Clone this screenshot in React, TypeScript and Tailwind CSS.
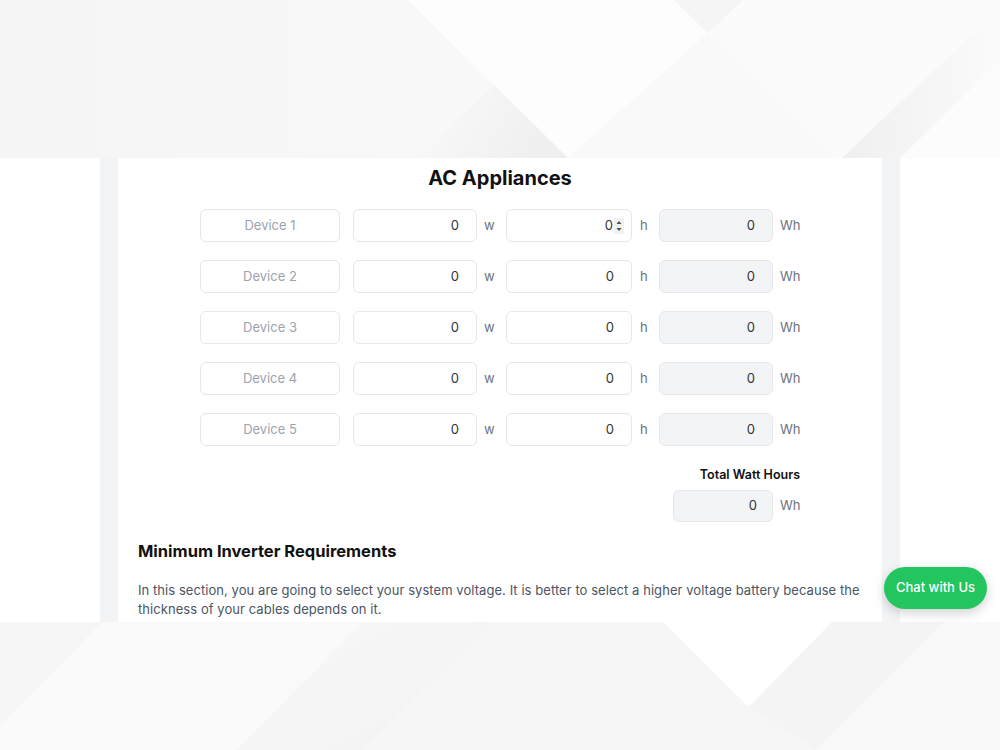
import React from "react";

const DEVICES = ["Device 1", "Device 2", "Device 3", "Device 4", "Device 5"];

function Spinner() {
  return (
    <svg width="10" height="16" viewBox="0 0 10 16" className="ml-[1px]">
      <rect x="0" y="0" width="10" height="16" fill="#f1f1f1" />
      <path d="M2.5 6 L5 3 L7.5 6 Z" fill="#505050" />
      <path d="M2.5 10 L5 13 L7.5 10 Z" fill="#505050" />
    </svg>
  );
}

function Backdrop() {
  return (
    <svg
      className="absolute inset-0 h-full w-full"
      viewBox="0 0 1000 750"
      preserveAspectRatio="none"
    >
      <defs>
        <linearGradient id="lft" x1="0" y1="0" x2="1" y2="0">
          <stop offset="0" stopColor="#f5f5f5" />
          <stop offset="1" stopColor="#f9f9f9" />
        </linearGradient>
        <linearGradient id="shd" x1="0" y1="0" x2="1" y2="0.3">
          <stop offset="0" stopColor="#fafafa" />
          <stop offset="1" stopColor="#efefef" />
        </linearGradient>
        <linearGradient id="rgt" x1="0" y1="0" x2="1" y2="0">
          <stop offset="0" stopColor="#efefef" />
          <stop offset="1" stopColor="#fbfbfb" />
        </linearGradient>
        <linearGradient id="btm" x1="0" y1="0" x2="1" y2="1">
          <stop offset="0" stopColor="#f7f7f7" />
          <stop offset="1" stopColor="#f3f3f3" />
        </linearGradient>
      </defs>
      <rect x="0" y="0" width="1000" height="750" fill="#f8f8f8" />
      {/* top band */}
      <polygon points="0,0 408,0 568,158 0,158" fill="url(#lft)" />
      <polygon points="408,0 674,0 708,33 568,158" fill="#fdfdfd" />
      <polygon points="494,85 420,158 568,158" fill="url(#shd)" />
      <polygon points="674,0 743,0 708,33" fill="#f5f5f5" />
      <polygon points="743,0 1000,0 1000,8 842,158 834,158 708,33" fill="#fbfbfb" />
      <polygon points="708,33 834,158 568,158" fill="#f9f9f9" />
      <polygon points="1000,8 1000,60 900,158 842,158" fill="url(#rgt)" />
      <polygon points="1000,60 1000,158 900,158" fill="#fcfcfc" />
      {/* bottom band */}
      <polygon points="0,622 102,622 0,727" fill="#f6f6f6" />
      <polygon points="102,622 363,622 236,750 0,750 0,727" fill="#fafafa" />
      <polygon points="363,622 491,622 363,750 236,750" fill="url(#btm)" />
      <polygon points="491,622 663,622 749,707 816,750 363,750" fill="#f6f6f6" />
      <polygon points="663,622 832,622 749,707" fill="#ffffff" />
      <polygon points="832,622 944,622 816,750 749,707" fill="#f4f4f4" />
      <polygon points="944,622 1000,622 1000,750 816,750" fill="#f9f9f9" />
    </svg>
  );
}

export default function App() {
  return (
    <div
      className="relative h-[750px] w-[1000px] overflow-hidden"
      style={{ fontFamily: "Inter, 'Noto Sans', sans-serif" }}
    >
      <Backdrop />
      <div className="relative flex h-full flex-col">
        <div className="h-[158px]" />

        <div className="relative h-[464px] bg-white">
          <div className="mx-auto h-full w-[800px] bg-[#f3f4f6] px-[18px]">
            <div className="h-full bg-white px-5 pt-[6px]">
              <h2 className="text-center text-[20px] font-bold leading-7 text-[#111]">
                AC Appliances
              </h2>

              <div className="mx-auto mt-[17px] flex w-fit flex-col gap-[18px]">
                {DEVICES.map((d, i) => (
                  <div key={d} className="flex h-[33px] items-center text-[13px]">
                    <div className="flex h-[33px] w-[140px] shrink-0 items-center justify-center rounded-md border border-[#e5e7eb] text-[#9ca3af]">
                      {d}
                    </div>
                    <div className="ml-[13px] flex h-[33px] w-[124px] shrink-0 items-center justify-end rounded-md border border-[#e5e7eb] pr-[17px] text-[#333]">
                      0
                    </div>
                    <span className="ml-[7px] w-[9px] shrink-0 text-[#6b7280]">w</span>
                    <div
                      className={
                        i === 0
                          ? "ml-[13px] flex h-[33px] w-[126px] shrink-0 items-center justify-end rounded-md border border-[#e5e7eb] pr-[7px] text-[#333]"
                          : "ml-[13px] flex h-[33px] w-[126px] shrink-0 items-center justify-end rounded-md border border-[#e5e7eb] pr-[17px] text-[#333]"
                      }
                    >
                      0{i === 0 && <Spinner />}
                    </div>
                    <span className="ml-[8px] w-[7px] shrink-0 text-[#6b7280]">h</span>
                    <div className="ml-[12px] flex h-[33px] w-[114px] shrink-0 items-center justify-end rounded-md border border-[#e5e7eb] bg-[#f3f4f6] pr-[17px] text-[#333]">
                      0
                    </div>
                    <span className="ml-[7px] w-[20px] shrink-0 text-[#6b7280]">Wh</span>
                  </div>
                ))}

                <div className="mt-[2px] flex flex-col items-end">
                  <div className="text-[12.5px] font-semibold text-[#111]">Total Watt Hours</div>
                  <div className="mt-[5px] flex items-center text-[13px]">
                    <div className="flex h-8 w-[100px] shrink-0 items-center justify-end rounded-md border border-[#e5e7eb] bg-[#f3f4f6] pr-[15px] text-[#333]">
                      0
                    </div>
                    <span className="ml-[7px] w-[20px] shrink-0 text-[#6b7280]">Wh</span>
                  </div>
                </div>
              </div>

              <h3 className="mt-[17px] text-[16.5px] font-bold leading-6 text-[#111]">
                Minimum Inverter Requirements
              </h3>
              <p className="mt-[18px] text-[13px] leading-[19px] tracking-[0.06px] text-[#4b5563]">
                In this section, you are going to select your system voltage. It is better to
                select a higher voltage battery because the thickness of your cables depends on
                it.
              </p>
            </div>
          </div>

          <button className="absolute bottom-[13px] right-[13px] h-[42px] w-[103px] rounded-full bg-[#22c55e] text-[13px] font-medium text-white shadow-[0_4px_12px_rgba(0,0,0,0.18)]">
            Chat with Us
          </button>
        </div>

        <div className="flex-1" />
      </div>
    </div>
  );
}
